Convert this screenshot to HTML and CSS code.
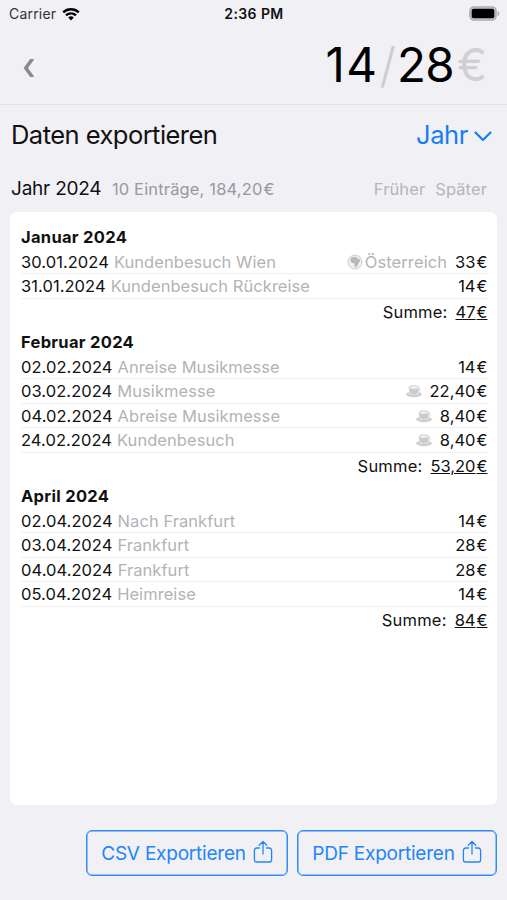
FILE: index.html
```
<!DOCTYPE html>
<html lang="de">
<head>
<meta charset="utf-8">
<title>Daten exportieren</title>
<link rel="stylesheet" href="styles.css">
</head>
<body>
<svg class="defs" aria-hidden="true">
  <symbol id="cup" viewBox="0 0 16 14">
    <ellipse cx="8" cy="10.200" rx="7.700" ry="3" fill="#cbcbce"/>
    <ellipse cx="8" cy="9.300" rx="6.400" ry="1.900" fill="#dcdcdf"/>
    <path d="M2.700 3.500C2.800 7 4.500 10.300 7.900 10.300S13 7 13.100 3.500z" fill="#cbcbce"/>
    <path d="M12.700 4.500c2.400-.6 2.400 2.500-.8 2.900" fill="none" stroke="#d6d6d9"/>
    <ellipse cx="7.900" cy="3.500" rx="5.100" ry="1.900" fill="#efeff0" stroke="#c6c6c9" stroke-width=".7"/>
  </symbol>
  <symbol id="share" viewBox="0 0 20 24">
    <path d="M6.500 8H3.700a2.300 2.300 0 0 0-2.300 2.300v9.400A2.300 2.300 0 0 0 3.700 22h12.600a2.300 2.300 0 0 0 2.300-2.300v-9.400A2.300 2.300 0 0 0 16.300 8h-2.800M10 14V2M6.200 5.300 10 1.500l3.800 3.800" fill="none" stroke="currentColor" stroke-width="1.300" stroke-linecap="round" stroke-linejoin="round"/>
  </symbol>
</svg>
<div class="status">
  <div class="left"><span class="carrier">Carrier</span><svg class="wifi" viewBox="0 0 18 14"><path d="M1.200 5.300a11.300 11.300 0 0 1 15.600 0M4 8.400a7.200 7.200 0 0 1 10 0" fill="none" stroke="#000" stroke-width="2.400"/><path d="M9 13.500 6.200 10.600a4 4 0 0 1 5.600 0z"/></svg></div>
  <span class="time">2:36 PM</span>
  <svg class="battery" viewBox="0 0 31 15"><rect x=".9" y=".9" width="26.200" height="13.200" rx="4" fill="#c4c4c7" stroke="#aaaaad" stroke-width="1.300"/><rect x="2.700" y="2.700" width="22.600" height="9.600" rx="2" fill="#000"/><path d="M28.600 5v5c2.300-.8 2.300-4.200 0-5z" fill="#aaaaad"/></svg>
</div>
<header class="top">
  <svg class="back" viewBox="0 0 12 20"><path d="M7.200 1H11.400L5 10 11.400 19H7.200L.6 10z" fill="#8a8a8e"/></svg>
  <div class="total"><span class="n1">14</span><span class="slash">/</span><span class="n2">28</span><span class="euro">€</span></div>
</header>
<main>
  <div class="titlebar"><h1>Daten exportieren</h1><span class="picker"><span class="pick">Jahr</span><svg viewBox="0 0 18 11"><path d="M1.500 1.500 9 9l7.500-7.500" fill="none" stroke="currentColor" stroke-width="2.200" stroke-linecap="round" stroke-linejoin="round"/></svg></span></div>
  <div class="period"><span class="year">Jahr 2024</span><span class="info">10 Einträge, 184,20<i>€</i></span><span class="prev">Früher</span><span class="next">Später</span></div>
  <div class="card">
    <section>
      <h2>Januar 2024</h2>
      <div class="row"><span class="date">30.01.2024</span><span class="note">Kundenbesuch Wien</span><svg class="globe" viewBox="0 0 16 16"><circle cx="8" cy="8" r="7" fill="#f1f1f3" stroke="#cdcdd0" stroke-width="1"/><path d="M3.500 4.500 6 2.800l3.500.3 1.200 1.500 1.700.3 1 2.400-1.700 1.200-.8 2.500-2 2.500-1.300-1-.3-3.200-2.300-.4-1.500-1.700z" fill="#b9b9bd"/></svg><span class="land">Österreich</span><span class="amt">33<i>€</i></span></div>
      <div class="row"><span class="date">31.01.2024</span><span class="note">Kundenbesuch Rückreise</span><span class="amt">14<i>€</i></span></div>
      <div class="sum"><span class="lbl">Summe:</span><span class="amt">47<i>€</i></span></div>
    </section>
    <section>
      <h2>Februar 2024</h2>
      <div class="row"><span class="date">02.02.2024</span><span class="note">Anreise Musikmesse</span><span class="amt">14<i>€</i></span></div>
      <div class="row"><span class="date">03.02.2024</span><span class="note">Musikmesse</span><svg class="cup"><use href="#cup"/></svg><span class="amt">22,40<i>€</i></span></div>
      <div class="row"><span class="date">04.02.2024</span><span class="note">Abreise Musikmesse</span><svg class="cup"><use href="#cup"/></svg><span class="amt">8,40<i>€</i></span></div>
      <div class="row"><span class="date">24.02.2024</span><span class="note">Kundenbesuch</span><svg class="cup"><use href="#cup"/></svg><span class="amt">8,40<i>€</i></span></div>
      <div class="sum"><span class="lbl">Summe:</span><span class="amt">53,20<i>€</i></span></div>
    </section>
    <section>
      <h2>April 2024</h2>
      <div class="row"><span class="date">02.04.2024</span><span class="note">Nach Frankfurt</span><span class="amt">14<i>€</i></span></div>
      <div class="row"><span class="date">03.04.2024</span><span class="note">Frankfurt</span><span class="amt">28<i>€</i></span></div>
      <div class="row"><span class="date">04.04.2024</span><span class="note">Frankfurt</span><span class="amt">28<i>€</i></span></div>
      <div class="row"><span class="date">05.04.2024</span><span class="note">Heimreise</span><span class="amt">14<i>€</i></span></div>
      <div class="sum"><span class="lbl">Summe:</span><span class="amt">84<i>€</i></span></div>
    </section>
  </div>
  <div class="actions">
    <button class="btn csv"><span>CSV Exportieren</span><svg><use href="#share"/></svg></button>
    <button class="btn pdf"><span>PDF Exportieren</span><svg><use href="#share"/></svg></button>
  </div>
</main>
</body>
</html>
```

FILE: styles.css
```
* { box-sizing: border-box; }
body { margin: 0; width: 507px; height: 900px; overflow: hidden; background: #f1f0f5; font-family: Inter, "Liberation Sans", sans-serif; color: #111; display: flex; flex-direction: column; }
i { font-style: normal; margin-left: 1px; }
.defs { position: absolute; width: 0; height: 0; }
.status { display: grid; grid-template-columns: 1fr auto 1fr; align-items: center; height: 27px; padding: 0 7px 0 8px; font-size: 14px; }
.left { display: flex; align-items: center; padding-left: 1px; }
.carrier { color: #333; letter-spacing: .2px; }
.wifi { width: 18px; height: 14px; margin-left: 6px; }
.time { font-weight: 600; letter-spacing: .4px; }
.battery { width: 31px; height: 15px; justify-self: end; }
.top { height: 78px; border-bottom: 1px solid #e2e2e6; display: flex; align-items: center; justify-content: space-between; padding: 0 20px 0 23px; }
.back { width: 12px; height: 20px; margin-top: 4px; }
.total { font-size: 47.500px; line-height: 60px; display: flex; color: #000; margin-top: -2px; }
.n1 { margin-right: 1px; letter-spacing: 1.500px; }
.n2 { letter-spacing: -.7px; margin-right: 3px; }
.slash { color: #ccccd0; font-weight: 300; margin-right: 1px; }
.euro { color: #d0d0d4; font-size: 45px; }
main { flex: 1; display: flex; flex-direction: column; padding: 0 10px; }
.titlebar { height: 59px; display: flex; align-items: center; justify-content: space-between; padding: 0 5px 0 1px; }
h1 { margin: 0; font-weight: 400; font-size: 25.500px; letter-spacing: -.54px; }
.picker { color: #147efb; font-size: 25.500px; letter-spacing: -.4px; display: flex; align-items: center; gap: 6px; }
.picker svg { width: 18px; height: 11px; margin-top: 3px; }
.period { height: 48px; display: flex; align-items: center; font-size: 16.500px; padding: 0 0 0 1px; }
.year { font-size: 19px; letter-spacing: -.22px; }
.info { color: #98989d; letter-spacing: .15px; margin: 1px auto 0 10.500px; }
.prev, .next { color: #b5b5ba; margin: 1px 10px 0 0; letter-spacing: .1px; }
.card { height: 593px; background: #fff; border-radius: 7px; padding: 12.500px 9.500px 0 11px; font-size: 16.500px; }
section { margin-bottom: 4px; }
h2 { margin: 0; font-size: 16.500px; font-weight: 700; line-height: 25px; letter-spacing: .3px; }
.row { display: flex; align-items: center; height: 24.500px; border-bottom: 1px solid #f0f0f2; padding-top: 1px; }
.date { letter-spacing: .06px; }
.note { color: #b3b3b6; letter-spacing: .05px; margin: 0 auto 0 5px; }
.land { color: #b3b3b6; letter-spacing: .1px; }
.globe { width: 16px; height: 16px; margin-right: 2px; }
.cup { width: 16px; height: 14px; }
.row .amt { margin-left: 8px; }
.sum { height: 27px; display: flex; align-items: center; justify-content: flex-end; gap: 8px; }
.sum .lbl { letter-spacing: .2px; }
.sum .amt { text-decoration: underline; }
.actions { display: flex; justify-content: flex-end; gap: 9px; margin-top: 25px; }
.btn { height: 46px; border: 1px solid #2f8cf9; box-shadow: inset 0 0 0 .5px #2f8cf9; border-radius: 6px; background: transparent; color: #2385fa; font: 19px Inter, sans-serif; letter-spacing: -.22px; display: flex; align-items: center; justify-content: center; gap: 7px; padding: 0; }
.btn svg { width: 20px; height: 24px; margin-top: -3px; }
.csv { width: 202px; }
.pdf { width: 200px; }
```
